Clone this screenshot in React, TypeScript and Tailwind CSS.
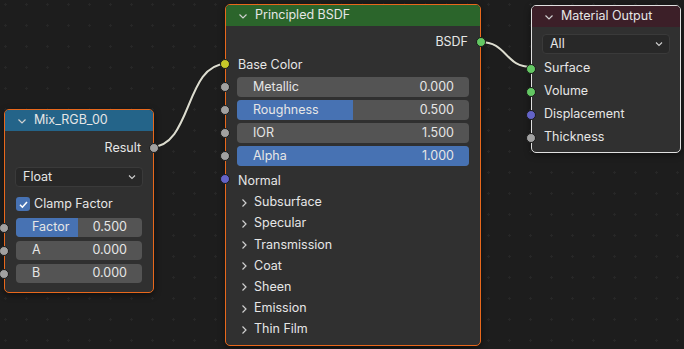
import React from "react";

const font = { fontFamily: "Inter, 'Noto Sans', sans-serif" };

type SocketColor = "grey" | "yellow" | "green" | "blue";

const socketClass: Record<SocketColor, string> = {
  grey: "bg-[#a1a1a1]",
  yellow: "bg-[#c7c729]",
  green: "bg-[#63c763]",
  blue: "bg-[#6363c7]",
};

function Socket({ color, side }: { color: SocketColor; side: "left" | "right" }) {
  return (
    <span
      className={`absolute top-1/2 -translate-y-1/2 w-[10px] h-[10px] rounded-full border border-[#1a1a1a] ${socketClass[color]} ${
        side === "left" ? "left-[-6px]" : "right-[-6px]"
      }`}
    />
  );
}

function Chevron({ dir = "down" }: { dir?: "down" | "right" }) {
  return (
    <svg width="10" height="10" viewBox="0 0 10 10" className="shrink-0">
      {dir === "down" ? (
        <path d="M1.5 3.5 5 7 8.5 3.5" fill="none" stroke="#d0d0d0" strokeWidth="1.2" />
      ) : (
        <path d="M3.5 1.5 7 5 3.5 8.5" fill="none" stroke="#d0d0d0" strokeWidth="1.2" />
      )}
    </svg>
  );
}

function Header({ title, bg }: { title: string; bg: string }) {
  return (
    <div className={`h-[21px] flex items-center gap-[7px] pl-[12px] rounded-t-[4px] ${bg}`}>
      <Chevron />
      <span className="text-[12.5px] text-[#e6e6e6]">{title}</span>
    </div>
  );
}

function Slider({
  label,
  value,
  fill,
  socket = "grey",
  height = "h-[20px]",
}: {
  label: string;
  value: string;
  fill: number;
  socket?: SocketColor;
  height?: string;
}) {
  return (
    <div className="relative">
      <Socket color={socket} side="left" />
      <div className={`relative mx-[11px] ${height} rounded-[4px] bg-[#545454] overflow-hidden`}>
        <div className="absolute inset-y-0 left-0 bg-[#4772b3]" style={{ width: `${fill * 100}%` }} />
        <div className="relative h-full flex items-center justify-between pl-[16px] pr-[15px] text-[12.5px] text-[#e6e6e6]">
          <span>{label}</span>
          <span>{value}</span>
        </div>
      </div>
    </div>
  );
}

function SocketRow({
  label,
  color,
  side,
  h = "h-[23px]",
  extra = "",
}: {
  label: string;
  color: SocketColor;
  side: "left" | "right";
  h?: string;
  extra?: string;
}) {
  return (
    <div
      className={`relative ${h} ${extra} flex items-center text-[12.5px] text-[#e6e6e6] ${
        side === "left" ? "pl-[12px]" : "justify-end pr-[12px]"
      }`}
    >
      <Socket color={color} side={side} />
      {label}
    </div>
  );
}

function Dropdown({ label }: { label: string }) {
  return (
    <div className="mx-[10px] h-[20px] rounded-[4px] bg-[#282828] border border-[#3a3a3a] flex items-center justify-between pl-[7px] pr-[6px] text-[12.5px] text-[#e6e6e6]">
      <span>{label}</span>
      <svg width="8" height="8" viewBox="0 0 8 8">
        <path d="M1 2.5 4 5.5 7 2.5" fill="none" stroke="#d0d0d0" strokeWidth="1.1" />
      </svg>
    </div>
  );
}

function MixNode() {
  return (
    <div className="absolute left-[4px] top-[109px] w-[150px] h-[184px] rounded-[5px] border-[1.5px] border-[#e8681c] bg-[#303030] shadow-[0_2px_6px_rgba(0,0,0,0.5)]">
      <Header title="Mix_RGB_00" bg="bg-[#246489]" />
      <div className="pt-[6px]">
        <SocketRow label="Result" color="grey" side="right" h="h-[22px]" />
        <div className="mt-[8px]">
          <Dropdown label="Float" />
        </div>
        <div className="mt-[7px] h-[20px] flex items-center gap-[4px] pl-[11px] text-[12.5px] text-[#e6e6e6]">
          <span className="w-[14px] h-[14px] rounded-[3px] bg-[#4772b3] flex items-center justify-center">
            <svg width="11" height="11" viewBox="0 0 11 11">
              <path d="M2 5.8 4.4 8.2 9 3" fill="none" stroke="#ffffff" strokeWidth="1.6" />
            </svg>
          </span>
          Clamp Factor
        </div>
        <div className="mt-[4px] flex flex-col gap-[4px]">
          <Slider label="Factor" value="0.500" fill={0.49} height="h-[19px]" />
          <Slider label="A" value="0.000" fill={0} height="h-[19px]" />
          <Slider label="B" value="0.000" fill={0} height="h-[19px]" />
        </div>
      </div>
    </div>
  );
}

function PrincipledNode() {
  const panels = ["Subsurface", "Specular", "Transmission", "Coat", "Sheen", "Emission", "Thin Film"];
  return (
    <div className="absolute left-[225px] top-[4px] w-[256px] h-[342px] rounded-[5px] border-[1.5px] border-[#e8681c] bg-[#303030] shadow-[0_2px_6px_rgba(0,0,0,0.5)]">
      <Header title="Principled BSDF" bg="bg-[#2b652b]" />
      <div className="pt-[5px]">
        <SocketRow label="BSDF" color="green" side="right" h="h-[22px]" />
        <SocketRow label="Base Color" color="yellow" side="left" h="h-[22px]" extra="pt-[2px]" />
        <div className="mt-[2px] flex flex-col gap-[3px]">
          <Slider label="Metallic" value="0.000" fill={0} />
          <Slider label="Roughness" value="0.500" fill={0.5} />
          <Slider label="IOR" value="1.500" fill={0} />
          <Slider label="Alpha" value="1.000" fill={1} />
        </div>
        <SocketRow label="Normal" color="blue" side="left" h="h-[26px]" extra="pt-[5px]" />
        <div className="flex flex-col">
          {panels.map((p) => (
            <div key={p} className="h-[21.2px] flex items-center gap-[5px] pl-[13px] text-[12.5px] text-[#e6e6e6]">
              <Chevron dir="right" />
              {p}
            </div>
          ))}
        </div>
      </div>
    </div>
  );
}

function OutputNode() {
  return (
    <div className="absolute left-[531px] top-[5px] w-[150px] h-[148px] rounded-[5px] border-[1.5px] border-[#e0e0e0] bg-[#303030] shadow-[0_2px_6px_rgba(0,0,0,0.5)]">
      <Header title="Material Output" bg="bg-[#3c1f28]" />
      <div className="pt-[7px]">
        <Dropdown label="All" />
        <div className="mt-[3px]">
          <SocketRow label="Surface" color="green" side="left" />
          <SocketRow label="Volume" color="green" side="left" />
          <SocketRow label="Displacement" color="blue" side="left" />
          <SocketRow label="Thickness" color="grey" side="left" />
        </div>
      </div>
    </div>
  );
}

export default function App() {
  return (
    <div
      style={font}
      className="relative w-[684px] h-[349px] overflow-hidden bg-[#1d1d1d] bg-[radial-gradient(circle,#272727_1px,transparent_1.3px)] bg-size-[21px_21px] bg-position-[-5px_-6px]"
    >
      <svg className="absolute inset-0 pointer-events-none" width="684" height="349">
        <path d="M151 147 C 192 147, 185 64, 226 64" fill="none" stroke="#151515" strokeWidth="3.5" opacity="0.5" />
        <path d="M151 147 C 192 147, 185 64, 226 64" fill="none" stroke="#dcdccf" strokeWidth="2" />
        <path d="M480 42 C 508 42, 504 67, 532 67" fill="none" stroke="#151515" strokeWidth="3.5" opacity="0.5" />
        <path d="M480 42 C 508 42, 504 67, 532 67" fill="none" stroke="#dcdccf" strokeWidth="2" />
      </svg>
      <MixNode />
      <PrincipledNode />
      <OutputNode />
    </div>
  );
}
